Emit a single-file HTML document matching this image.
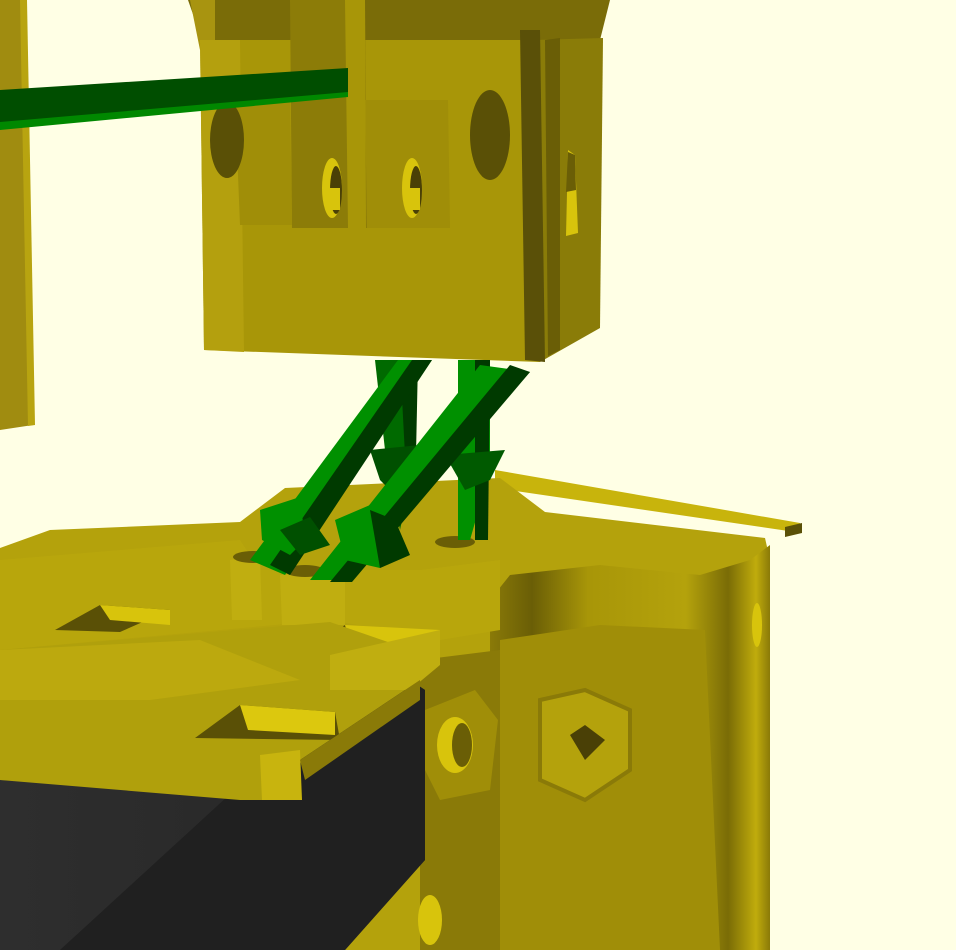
<!DOCTYPE html>
<html><head><meta charset="utf-8"><style>html,body{margin:0;padding:0;background:#ffffe5;}svg{display:block}</style></head>
<body>
<svg width="956" height="950" viewBox="0 0 956 950" xmlns="http://www.w3.org/2000/svg">
<defs>
<linearGradient id="cyl" x1="0" x2="1" y1="0" y2="0">
<stop offset="0" stop-color="#8a7a08"/><stop offset="0.15" stop-color="#6a5e06"/><stop offset="0.35" stop-color="#a89608"/><stop offset="0.7" stop-color="#b4a20c"/><stop offset="0.85" stop-color="#7a6c06"/><stop offset="0.95" stop-color="#c0ac0c"/><stop offset="1" stop-color="#8a7a08"/>
</linearGradient>
<linearGradient id="blk" x1="0" x2="1" y1="0" y2="0"><stop offset="0" stop-color="#2e2e2e"/><stop offset="1" stop-color="#262626"/></linearGradient>
</defs>
<rect width="956" height="950" fill="#ffffe5"/>
<polygon points="0,0 25,0 33,425 0,430" fill="#a08c10"/>
<polygon points="20,0 27,0 35,425 28,426" fill="#b8a410"/>
<polygon points="188,0 610,0 600,40 535,40 203,40 195,20" fill="#7a6c08"/>
<polygon points="190,0 215,0 215,50 200,50" fill="#a89410"/>
<polygon points="200,40 535,40 540,362 204,350" fill="#a89608"/>
<polygon points="200,40 240,40 244,352 204,350" fill="#b4a00e"/>
<polygon points="290,0 365,0 367,228 292,228" fill="#8c7c08"/>
<polygon points="235,100 290,100 292,225 240,225" fill="#a08e08"/>
<polygon points="365,100 448,100 450,228 367,228" fill="#a08e08"/>
<polygon points="345,0 365,0 366,228 348,228" fill="#a89608"/>
<polygon points="535,40 603,38 600,328 540,362" fill="#8a7c08"/>
<polygon points="520,30 540,30 545,362 525,360" fill="#5a5008"/>
<polygon points="545,40 560,38 560,350 548,356" fill="#6a5e06"/>
<polygon points="568,150 575,155 578,233 566,236" fill="#d8c40c"/>
<polygon points="568,152 575,155 576,190 566,192" fill="#6a5e06"/>
<ellipse cx="227" cy="140" rx="17" ry="38" fill="#5a5006"/>
<ellipse cx="490" cy="135" rx="20" ry="45" fill="#5a5006"/>
<ellipse cx="332" cy="188" rx="10" ry="30" fill="#d8c40c"/>
<ellipse cx="336" cy="190" rx="6" ry="24" fill="#4a4006"/>
<rect x="330" y="188" width="10" height="22" fill="#d8c40c"/>
<ellipse cx="412" cy="188" rx="10" ry="30" fill="#d8c40c"/>
<ellipse cx="416" cy="190" rx="6" ry="24" fill="#4a4006"/>
<rect x="410" y="188" width="10" height="22" fill="#d8c40c"/>
<polygon points="0,90 348,68 348,95 0,128" fill="#004e00"/>
<polygon points="0,122 348,92 348,97 0,130" fill="#008800"/>
<polygon points="495,470 800,523 802,533 495,488" fill="#c8b40c"/>
<polygon points="785,527 802,523 802,533 785,537" fill="#5a5006"/>
<polygon points="0,548 50,530 240,522 285,488 500,478 545,512 765,538 770,560 770,950 0,950" fill="#b4a20c"/>
<polygon points="490,600 510,575 600,565 700,575 750,560 770,545 770,950 490,950" fill="url(#cyl)"/>
<polygon points="500,640 600,625 705,630 720,950 500,950" fill="#a08e08"/>
<polygon points="540,700 585,690 630,710 630,770 585,800 540,780" fill="#b4a20c" stroke="#8a7a08" stroke-width="4"/>
<polygon points="570,735 585,725 605,740 585,760" fill="#4a4006"/>
<ellipse cx="757" cy="625" rx="5" ry="22" fill="#d8c40c"/>
<polygon points="420,660 500,650 500,950 420,950" fill="#8a7a08"/>
<polygon points="425,710 475,690 498,720 490,790 440,800 425,770" fill="#a08e08"/>
<ellipse cx="455" cy="745" rx="18" ry="28" fill="#d8c40c"/>
<ellipse cx="462" cy="745" rx="10" ry="22" fill="#6a5e06"/>
<ellipse cx="430" cy="920" rx="12" ry="25" fill="#d8c40c"/>
<polygon points="0,560 240,540 260,570 420,570 500,560 500,630 440,640 330,620 0,650" fill="#b8a60c"/>
<polygon points="230,560 260,555 262,620 232,620" fill="#c0ae10"/>
<polygon points="280,575 345,570 345,625 282,625" fill="#c0ae10"/>
<ellipse cx="253" cy="557" rx="20" ry="6" fill="#6a5e06"/>
<ellipse cx="305" cy="571" rx="20" ry="6" fill="#6a5e06"/>
<ellipse cx="455" cy="542" rx="20" ry="6" fill="#6a5e06"/>
<polygon points="55,630 100,605 170,610 120,632" fill="#5a5006"/>
<polygon points="100,605 170,610 170,625 110,620" fill="#d8c40c"/>
<polygon points="310,647 345,625 440,630 440,650" fill="#d8c40c"/>
<polygon points="310,647 345,625 350,645" fill="#5a5006"/>
<polygon points="0,780 240,785 410,680 425,690 425,860 345,950 0,950" fill="url(#blk)"/>
<polygon points="240,785 410,680 425,690 425,860 345,950 60,950" fill="#202020"/>
<polygon points="0,650 330,622 440,660 420,680 300,760 300,800 240,800 0,780" fill="#b0a00c"/>
<polygon points="0,650 200,640 300,680 150,700 0,700" fill="#bca90e"/>
<polygon points="195,738 240,705 335,712 340,740" fill="#5a5006"/>
<polygon points="240,705 335,712 335,735 248,730" fill="#dcc80e"/>
<polygon points="260,755 300,750 302,800 262,800" fill="#c8b40e"/>
<polygon points="330,655 440,630 440,665 410,690 330,690" fill="#c0ae10"/>
<polygon points="300,760 420,680 420,700 305,780" fill="#8a7a08"/>
<polygon points="375,360 415,360 415,460 400,530 385,450" fill="#006a00"/>
<polygon points="400,360 418,360 416,455 405,455" fill="#003a00"/>
<polygon points="458,360 490,360 490,470 470,540 458,540" fill="#009000"/>
<polygon points="475,360 490,360 488,540 475,540" fill="#003a00"/>
<polygon points="370,450 420,445 425,475 400,500 380,480" fill="#005000"/>
<polygon points="445,455 505,450 490,480 465,490" fill="#005a00"/>
<polygon points="250,560 398,360 432,360 285,575" fill="#009000"/>
<polygon points="270,565 412,360 432,360 290,575" fill="#003a00"/>
<polygon points="310,580 480,365 530,372 345,580" fill="#009000"/>
<polygon points="330,582 510,365 530,372 352,582" fill="#003a00"/>
<polygon points="260,510 300,497 305,540 290,555 262,540" fill="#009000"/>
<polygon points="280,530 310,517 330,545 300,555" fill="#005000"/>
<polygon points="335,520 370,505 405,555 380,568 345,560" fill="#009000"/>
<polygon points="370,510 395,520 410,555 380,568" fill="#003a00"/>
</svg>
</body></html>
